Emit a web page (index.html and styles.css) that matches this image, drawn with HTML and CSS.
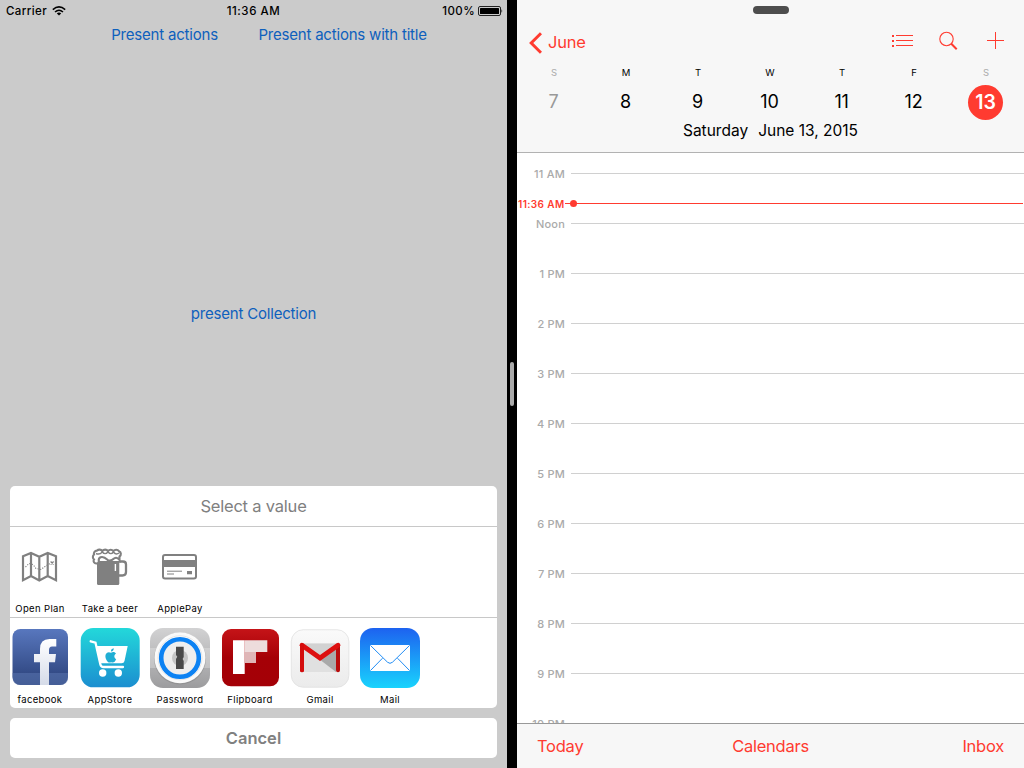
FILE: index.html
```html
<!DOCTYPE html>
<html lang="en">
<head>
<meta charset="utf-8">
<title>Split view</title>
<link rel="stylesheet" href="styles.css">
</head>
<body>
<div class="screen">
  <section class="app">
    <header class="status">
      <div class="carrier"><span class="carrier-name">Carrier</span>
        <svg width="14" height="10" viewBox="0 0 14 10" fill="none" stroke="#000" stroke-width="1.5"><path d="M.8 3.6Q7-1.8 13.2 3.6M3 6Q7 2.5 11 6"/><path d="M4.8 7.4Q7 5.7 9.2 7.4L7 9.6Z" fill="#000" stroke="none"/></svg>
      </div>
      <div class="clock"><span class="clock-text">11:36 AM</span></div>
      <div class="power"><span class="power-text">100%</span>
        <svg width="25" height="10" viewBox="0 0 25 10"><rect x=".5" y=".5" width="22" height="9" rx="1.5" fill="none" stroke="#222"/><rect x="2" y="2" width="19" height="6" rx=".6"/><path d="M23.5 3Q25 5 23.5 7Z"/></svg>
      </div>
    </header>
    <nav class="links"><a class="link-a">Present actions</a><a class="link-b">Present actions with title</a></nav>
    <div class="middle"><a class="link-c">present Collection</a></div>
    <div class="sheet">
      <div class="sheet-title"><span class="select-text">Select a value</span></div>
      <div class="row actions">
        <div class="item"><svg class="glyph" viewBox="0 0 40 40" fill="none" stroke="#808080" stroke-width="2.2"><path d="M3 9.3 11 5.9 19.3 9.7 27.7 5.9 36 9.3V33.2L27.7 29 19.3 33.4 11 29 3 33.2ZM11 5.6V30M19.3 9.4V33.7M27.7 5.6V30"/><path d="M5.5 20 9 16.5 13 17.5 16 21.5 21 22.5 25 19.5 30 16.5" stroke-width="1.1" stroke-dasharray="1.2 1.4"/><path d="m30.6 14.5 3 3m0-3-3 3" stroke-width="1.2"/></svg><span class="n1">Open Plan</span></div>
        <div class="item"><svg class="glyph" viewBox="0 0 40 40"><path d="M7 14H29.3V36.5Q29.3 38 27.8 38H8.5Q7 38 7 36.5Z" fill="#808080"/><path d="M29 14.5H33Q36 14.5 36 17.5V25Q36 28.5 32.5 28.5H29" fill="none" stroke="#808080" stroke-width="2.3"/><path d="M6.5 16.5A2.6 2.6 0 0 1 4 12.5 3.3 3.3 0 0 1 4 7.5 3 3 0 0 1 7 3.6 3.6 3.6 0 0 1 12.3 4 3.6 3.6 0 0 1 18 4 3.6 3.6 0 0 1 23.4 4 3.5 3.5 0 0 1 29 4.2 3 3 0 0 1 29.5 9.5V13Q27 9.5 24 11.5 20.5 15 17.5 12.8 13.5 9 10.5 10.3 8.3 11.3 8.8 14.5 8.6 16.4 6.5 16.5Z" fill="#fff" stroke="#808080" stroke-width="2.1"/><path d="M6 6.5Q9.5 8.2 12.3 5Q15 8.3 18 5Q21 8.3 23.4 5Q26 8.2 29 6" fill="none" stroke="#808080" stroke-width="1.4"/><path d="M25.4 17V24" stroke="#fff" stroke-width="1.4"/></svg><span class="n2">Take a beer</span></div>
        <div class="item"><svg class="glyph" viewBox="0 0 40 40"><rect x="3" y="8" width="33" height="23.5" rx="2" fill="#fff" stroke="#808080" stroke-width="2"/><path d="M2.5 13H36.5V20H2.5Z" fill="#808080"/><path d="M7 24.2H22M7 27H14" stroke="#808080"/><path d="M27 24H32V27.3H27Z" fill="#808080"/></svg><span class="n3">ApplePay</span></div>
      </div>
      <div class="row apps">
        <div class="item"><svg class="icon" viewBox="0 0 60 60"><defs><linearGradient id="fb" x2="0" y2="1"><stop stop-color="#5877be"/><stop offset="1" stop-color="#2a4078"/></linearGradient><linearGradient id="ff" x2="0" y2="1"><stop stop-color="#fff"/><stop offset="1" stop-color="#d5dbe8"/></linearGradient></defs><rect x="2.5" y="1" width="55.5" height="56" rx="8" fill="url(#fb)"/><path d="M2.5 45H58V49Q58 57 50 57H10.5Q2.5 57 2.5 49Z" fill="#5b76b0" opacity=".55"/><path d="M30 57V34.3H24V26H30V21Q30 11 39.5 11H46.3V18.5H42Q39 18.5 39 22V26H46L45 34.3H39V57Z" fill="url(#ff)"/></svg><span class="n4">facebook</span></div>
        <div class="item"><svg class="icon" viewBox="0 0 60 60"><defs><linearGradient id="as" x2="0" y2="1"><stop stop-color="#23d8da"/><stop offset="1" stop-color="#1b8ed0"/></linearGradient></defs><rect x=".7" width="59" height="59.3" rx="12.5" fill="url(#as)"/><path d="M10.7 13.3 15.5 14.7 20.4 36.5Q21 39 23.5 39H43" fill="none" stroke="#fff" stroke-width="2.3" stroke-linecap="round"/><path d="M16 18H47.7L44.5 33Q44 35.3 41.5 35.3H20Z" fill="#fff"/><circle cx="22.7" cy="45" r="3.7" fill="#fff"/><circle cx="38.3" cy="45" r="3.7" fill="#fff"/><path d="M31 24.8C33 23.2 35 24 36 25.4 33.6 27 34 30 36.2 31 35 34 33.5 35.3 31.2 34.2 28.8 35.3 27.4 34 26.2 31.5 23.8 26 27.5 22.8 31 24.8ZM31 23.5Q30.8 20.8 33.8 20.2Q33.8 23 31 23.5Z" fill="#20aed4"/></svg><span class="n5">AppStore</span></div>
        <div class="item"><svg class="icon" viewBox="0 0 60 60"><defs><linearGradient id="pw" x2="0" y2="1"><stop stop-color="#d2d2d3"/><stop offset="1" stop-color="#9c9c9e"/></linearGradient></defs><rect width="60" height="60" rx="13" fill="url(#pw)"/><path d="M0 20H60V40H0Z" fill="#fff" opacity=".25"/><circle cx="30" cy="30.6" r="26" fill="#858585" opacity=".5"/><circle cx="30" cy="29.8" r="25.5" fill="#fafafa"/><circle cx="30" cy="29.8" r="22" fill="#fff" stroke="#d5d5d5" stroke-width=".6"/><circle cx="30" cy="30" r="18.8" fill="#eee" stroke="#0c82f3" stroke-width="4.6"/><circle cx="30" cy="30" r="8" fill="#c5c5c5"/><path d="M26 18.8H33.7V29L32.6 31 33.7 33V41H26V31L27.3 28.8 26 27Z" fill="#494949"/></svg><span class="n6">Password</span></div>
        <div class="item"><svg class="icon" viewBox="0 0 60 60"><defs><linearGradient id="fl" x2="0" y2="1"><stop stop-color="#c51418"/><stop offset=".5" stop-color="#a50006"/><stop offset="1" stop-color="#a40006"/></linearGradient></defs><rect x="2" y="1" width="57" height="57.3" rx="9" fill="url(#fl)"/><path d="M13 12.3H24.7V46H13Z" fill="#fff"/><path d="M24.7 12.3H47.3V24H24.7Z" fill="#eddcdc"/><path d="M24.7 24H36V35H24.7Z" fill="#dfb6b7"/></svg><span class="n7">Flipboard</span></div>
        <div class="item"><svg class="icon" viewBox="0 0 60 60"><defs><linearGradient id="gm" x2="0" y2="1"><stop stop-color="#fafafa"/><stop offset="1" stop-color="#ebebeb"/></linearGradient></defs><rect x="1.3" y="1.7" width="57.6" height="57.6" rx="12" fill="url(#gm)" stroke="#dcdcdc" stroke-width=".7"/><path d="M12 15H48V44H12Z" fill="#e0e0e0"/><path d="M14 16H46L30 30Z" fill="#d2d2d2"/><path d="M29 31 46 19V44Z" fill="#a9a9a9"/><path d="M12 18V42.3M48 18V42.3" stroke="#b90c0c" stroke-width="4" stroke-linecap="round"/><path d="M12 17.2 30 30 48 17.2" fill="none" stroke="#dd1010" stroke-width="4.8" stroke-linecap="round" stroke-linejoin="miter"/><path d="M12 17.2V42.3" stroke="#d40d0d" stroke-width="4" stroke-linecap="round"/></svg><span class="n8">Gmail</span></div>
        <div class="item"><svg class="icon" viewBox="0 0 60 60"><defs><linearGradient id="ml" x2="0" y2="1"><stop stop-color="#1d62f0"/><stop offset="1" stop-color="#19d3fd"/></linearGradient></defs><rect width="60" height="60" rx="13" fill="url(#ml)"/><rect x="10" y="17" width="40" height="26" rx="1" fill="#fff"/><path d="M10.5 17.5 27.5 34.2Q30 36.5 32.5 34.2L49.5 17.5M10.5 42.5 22.5 30.2M49.5 42.5 37.5 30.2" fill="none" stroke="#218df5" stroke-width="1"/></svg><span class="n9">Mail</span></div>
      </div>
    </div>
    <div class="cancel"><span class="cancel-text">Cancel</span></div>
  </section>
  <div class="divider"><div class="grip"></div></div>
  <section class="calendar">
    <header class="head">
      <div class="handle"></div>
      <div class="toolbar">
        <div class="back"><svg width="13" height="22" viewBox="0 0 13 22" fill="none" stroke="#ff3b30" stroke-width="3"><path d="M12 1.2 2.2 11 12 20.8"/></svg><span class="june">June</span></div>
        <div class="tools">
          <svg width="22" height="14" viewBox="0 0 22 14" fill="#ff3b30"><path d="M0 1h2v2H0zM4 1h17v1H4zM0 6h2v2H0zM4 6h17v1H4zM0 11h2v2H0zM4 11h17v1H4z"/></svg>
          <svg width="20" height="20" viewBox="0 0 20 20" fill="none" stroke="#ff3b30"><circle cx="7.5" cy="8" r="6.7" stroke-width="1.1"/><path d="m12.3 12.8 5.4 5.4" stroke-width="2"/></svg>
          <svg width="18" height="18" viewBox="0 0 18 18" fill="#ff3b30"><path d="M8 0h1v8h8v1H9v8H8V9H0V8h8z"/></svg>
        </div>
      </div>
      <div class="week">
        <div class="day dim"><small>S</small><b>7</b></div>
        <div class="day"><small>M</small><b>8</b></div>
        <div class="day"><small>T</small><b>9</b></div>
        <div class="day"><small>W</small><b>10</b></div>
        <div class="day"><small>T</small><b>11</b></div>
        <div class="day"><small>F</small><b>12</b></div>
        <div class="day today"><small>S</small><b>13</b></div>
      </div>
      <div class="date"><span class="weekday">Saturday</span><span class="fulldate">June 13, 2015</span></div>
    </header>
    <div class="hours">
      <div class="hour"><span>11 AM</span><i></i></div>
      <div class="hour"><span>Noon</span><i></i></div>
      <div class="hour"><span>1 PM</span><i></i></div>
      <div class="hour"><span>2 PM</span><i></i></div>
      <div class="hour"><span>3 PM</span><i></i></div>
      <div class="hour"><span>4 PM</span><i></i></div>
      <div class="hour"><span>5 PM</span><i></i></div>
      <div class="hour"><span>6 PM</span><i></i></div>
      <div class="hour"><span>7 PM</span><i></i></div>
      <div class="hour"><span>8 PM</span><i></i></div>
      <div class="hour"><span>9 PM</span><i></i></div>
      <div class="hour"><span>10 PM</span><i></i></div>
      <div class="now"><span>11:36 AM</span><i></i></div>
    </div>
    <footer class="foot"><span class="f1">Today</span><span class="f2">Calendars</span><span class="f3">Inbox</span></footer>
  </section>
</div>
</body>
</html>
```

FILE: styles.css
```css
* { box-sizing: border-box; }
body { margin: 0; font-family: Inter, "Liberation Sans", sans-serif; color: #000; }
svg { display: block; flex: none; }
span, a { white-space: nowrap; }
.screen { display: flex; width: 1024px; height: 768px; overflow: hidden; }

.app { width: 507px; background: #cbcbcb; padding: 0 10px 10px; display: flex; flex-direction: column; }
.status { display: grid; grid-template-columns: 1fr 1fr 1fr; height: 22px; margin: 0 -6px 0 -4px; align-items: center; font-size: 11.5px; font-weight: 500; line-height: 22px; }
.carrier, .power { display: flex; align-items: center; gap: 5px; }
.carrier-name { letter-spacing: .4px; }
.clock { text-align: center; padding-right: 2px; }
.clock-text { letter-spacing: .55px; }
.power { justify-content: flex-end; gap: 3px; margin-right: 1px; margin-right: 0; }
.power-text { letter-spacing: .4px; }
.power svg { margin-right: 0; }
.links { display: flex; gap: 40.5px; justify-content: center; margin-left: 31px; height: 26px; line-height: 26px; }
.links, .middle { font-size: 15px; letter-spacing: -.2px; color: #0e60bd; }
.middle { flex: 1; padding-top: 253px; line-height: 26px; text-align: center; }
.sheet { height: 222px; background: #fff; border-radius: 5px; overflow: hidden; }
.sheet-title { height: 41px; border-bottom: 1px solid #c8c8c8; text-align: center; font-size: 16.5px; letter-spacing: -.2px; line-height: 40px; color: #808080; }
.row { display: flex; gap: 10px; }
.actions { height: 91px; border-bottom: 1px solid #c8c8c8; padding-top: 20px; }
.apps { padding-top: 10px; }
.item { width: 60px; display: flex; flex-direction: column; align-items: center; font-size: 9.5px; line-height: 12px; letter-spacing: .35px; }
.icon { width: 60px; height: 60px; margin-bottom: 6px; }
.glyph { width: 40px; height: 40px; margin-bottom: 16px; }
.cancel { height: 40px; margin-top: 10px; border-radius: 5px; background: #fff; text-align: center; line-height: 40px; font-size: 16.5px; font-weight: 600; color: #808080; }

.divider { width: 10px; background: #000; display: flex; align-items: center; justify-content: center; }
.grip { width: 4px; height: 44px; border-radius: 2px; background: #aaa; }

.calendar { width: 507px; display: flex; flex-direction: column; background: #fff; }
.head { height: 153px; background: #f7f7f7; border-bottom: 1px solid #b2b2b2; padding-top: 6px; }
.handle { width: 36px; height: 8px; border-radius: 4px; background: #4d4d4d; margin: 0 auto; }
.toolbar { display: flex; justify-content: space-between; height: 50px; padding: 18px 11px 0 12px; }
.back { display: flex; align-items: center; gap: 6px; height: 21px; font-size: 16.5px; line-height: 20px; letter-spacing: -.2px; color: #ff3b30; }
.june { margin-top: -2px; }
.tools { display: flex; align-items: center; height: 18px; gap: 25px; margin-right: 8px; }
.tools svg:last-child { margin-left: 3px; }
.week { display: grid; grid-template-columns: repeat(7, 72px); margin-left: 1px; }
.day { display: flex; flex-direction: column; align-items: center; }
.day small { font-size: 9.5px; line-height: 17px; height: 21px; }
.day b { font-size: 18px; font-weight: 400; line-height: 34px; height: 35px; width: 35px; text-align: center; letter-spacing: -.2px; margin-left: -1px; }
.dim b { color: #999; }
.dim small, .today small { color: #aaa; }
.today b { background: #ff3b30; border-radius: 50%; color: #fff; font-weight: 600; font-size: 19.5px; line-height: 35px; letter-spacing: 0; }
.date { display: flex; gap: 10px; justify-content: center; font-size: 15.5px; line-height: 20px; margin-top: 1px; }
.hours { flex: 1; height: 571px; overflow: hidden; position: relative; padding-top: 10px; }
.hour { display: flex; align-items: center; height: 20px; margin-bottom: 30px; gap: 6px; }
.hour span { width: 48px; padding-top: 1px; text-align: right; font-size: 11px; font-weight: 500; color: #aaa; letter-spacing: .2px; }
.hour i { flex: 1; height: 1px; background: #d0d0d0; }
.now { position: absolute; left: 0; top: 40px; width: 506px; height: 20px; display: flex; align-items: center; color: #ff3b30; font-size: 10px; font-weight: 600; letter-spacing: .4px; }
.now span { width: 48px; padding: 2px 0 0 1px; }
.now i { flex: 1; height: 1px; background: #ff3b30; position: relative; }
.now i::before { content: ""; position: absolute; left: 5px; top: -3px; width: 7px; height: 7px; border-radius: 50%; background: #ff3b30; }
.foot { height: 45px; margin-top: -1px; position: relative; border-top: 1px solid #999; background: #f7f7f7; display: grid; grid-template-columns: 1fr 1fr 1fr; padding: 0 20px; line-height: 45px; font-size: 16.5px; letter-spacing: -.25px; color: #ff3b30; }
.f2 { text-align: center; }
.f3 { text-align: right; }
```
